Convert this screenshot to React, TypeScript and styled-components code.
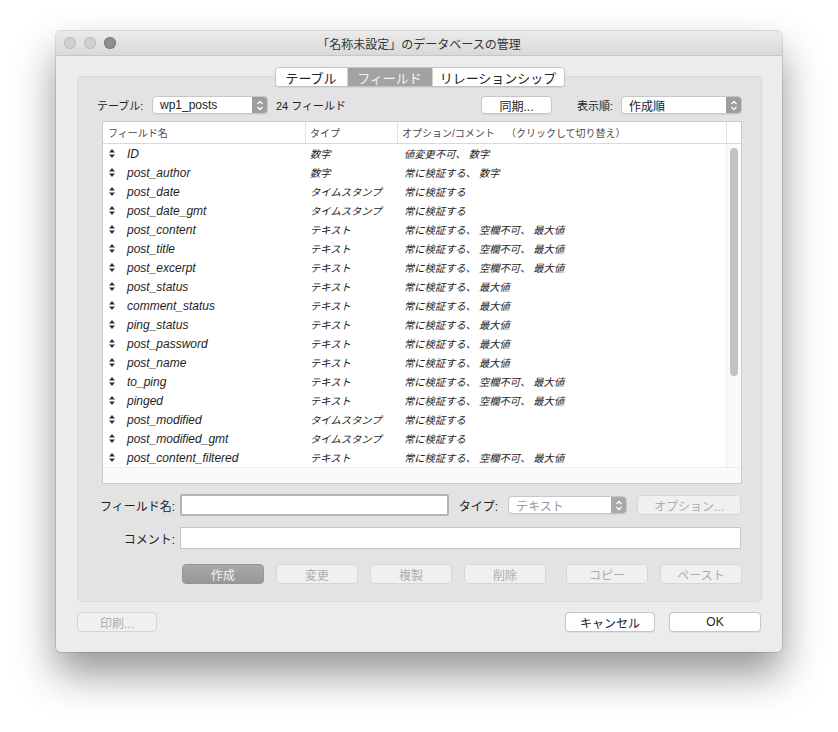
import React from 'react';
import styled, { createGlobalStyle } from 'styled-components';

const GlobalStyle = createGlobalStyle`
  html, body { margin: 0; padding: 0; background: #ffffff; }
  body { font-family: "Liberation Sans", "Noto Sans CJK JP", sans-serif; color: #222; }
`;

interface Field {
  name: string;
  type: string;
  option: string;
}

const VALID = '常に検証する';
const FULL = '常に検証する、 空欄不可、 最大値';
const MAX = '常に検証する、 最大値';

const fields: Field[] = [
  { name: 'ID', type: '数字', option: '値変更不可、 数字' },
  { name: 'post_author', type: '数字', option: '常に検証する、 数字' },
  { name: 'post_date', type: 'タイムスタンプ', option: VALID },
  { name: 'post_date_gmt', type: 'タイムスタンプ', option: VALID },
  { name: 'post_content', type: 'テキスト', option: FULL },
  { name: 'post_title', type: 'テキスト', option: FULL },
  { name: 'post_excerpt', type: 'テキスト', option: FULL },
  { name: 'post_status', type: 'テキスト', option: MAX },
  { name: 'comment_status', type: 'テキスト', option: MAX },
  { name: 'ping_status', type: 'テキスト', option: MAX },
  { name: 'post_password', type: 'テキスト', option: MAX },
  { name: 'post_name', type: 'テキスト', option: MAX },
  { name: 'to_ping', type: 'テキスト', option: FULL },
  { name: 'pinged', type: 'テキスト', option: FULL },
  { name: 'post_modified', type: 'タイムスタンプ', option: VALID },
  { name: 'post_modified_gmt', type: 'タイムスタンプ', option: VALID },
  { name: 'post_content_filtered', type: 'テキスト', option: FULL },
];

const Page = styled.div`
  padding: 31px 0 80px 56px;
`;

const Window = styled.div`
  width: 726px;
  height: 621px;
  background: #ececec;
  border-radius: 5px;
  box-shadow: 0 0 0 1px rgba(0, 0, 0, 0.12), 0 22px 42px rgba(0, 0, 0, 0.42);
  display: flex;
  flex-direction: column;
  overflow: hidden;
`;

const TitleBar = styled.div`
  height: 24px;
  flex-shrink: 0;
  display: flex;
  align-items: center;
  position: relative;
  background: linear-gradient(#ebebeb, #d9d9d9);
  border-bottom: 1px solid #c6c6c6;
`;

const Lights = styled.div`
  display: flex;
  gap: 8px;
  padding-left: 8px;
`;

const Light = styled.span<{ dark?: boolean }>`
  width: 12px;
  height: 12px;
  border-radius: 50%;
  background: ${(p) => (p.dark ? '#8e8e8e' : '#d1d1d1')};
  box-shadow: inset 0 0 0 1px ${(p) => (p.dark ? '#7c7c7c' : '#bdbdbd')};
`;

const Title = styled.div`
  position: absolute;
  left: 0;
  right: 0;
  text-align: center;
  font-size: 12px;
  color: #333;
  pointer-events: none;
`;

const Body = styled.div`
  display: flex;
  flex-direction: column;
  padding: 11px 20px 0 21px;
`;

const Tabs = styled.div`
  align-self: center;
  display: flex;
  height: 20px;
  box-sizing: border-box;
  margin-bottom: -11px;
  position: relative;
  z-index: 1;
  background: #fff;
  border: 1px solid #c2c2c2;
  border-radius: 4px;
  box-shadow: 0 1px 0 rgba(0, 0, 0, 0.06);
  overflow: hidden;
`;

const Tab = styled.div<{ active?: boolean; w: number }>`
  width: ${(p) => p.w}px;
  display: flex;
  align-items: center;
  justify-content: center;
  font-size: 13px;
  color: ${(p) => (p.active ? '#f4f4f4' : '#222')};
  background: ${(p) => (p.active ? '#a2a2a2' : '#fff')};
  border-left: 1px solid #d4d4d4;
  &:first-child { border-left: none; }
`;

const GroupBox = styled.div`
  height: 526px;
  box-sizing: border-box;
  background: #e3e3e3;
  border: 1px solid #dadada;
  border-radius: 5px;
  padding: 19px 19px 0 19px;
  display: flex;
  flex-direction: column;
`;

const Toolbar = styled.div`
  display: flex;
  align-items: center;
  height: 18px;
  font-size: 11px;
`;

const Label = styled.span<{ w?: number }>`
  font-size: 11px;
  color: #222;
  white-space: nowrap;
  ${(p) => (p.w ? `width: ${p.w}px;` : '')}
`;

const Popup = styled.div<{ w: number; disabled?: boolean }>`
  width: ${(p) => p.w}px;
  height: 18px;
  box-sizing: border-box;
  display: flex;
  align-items: center;
  background: #fff;
  border: 1px solid #c7c7c7;
  border-radius: 4px;
  box-shadow: 0 1px 0 rgba(0, 0, 0, 0.05);
  overflow: hidden;
  font-size: 12px;
  color: ${(p) => (p.disabled ? '#9a9a9a' : '#222')};
`;

const PopupText = styled.span`
  flex: 1;
  padding-left: 7px;
`;

const Stepper = styled.span<{ disabled?: boolean }>`
  width: 15px;
  height: 100%;
  display: flex;
  align-items: center;
  justify-content: center;
  background: ${(p) => (p.disabled ? '#a9a9a9' : '#9d9d9d')};
`;

const Button = styled.div<{ w: number; variant?: 'normal' | 'disabled' | 'pressed' }>`
  width: ${(p) => p.w}px;
  height: 20px;
  box-sizing: border-box;
  display: flex;
  align-items: center;
  justify-content: center;
  border-radius: 4px;
  font-size: 12px;
  flex-shrink: 0;
  ${(p) =>
    p.variant === 'disabled'
      ? 'background: #f0f0f0; border: 1px solid #d6d6d6; color: #adadad;'
      : p.variant === 'pressed'
      ? 'background: linear-gradient(#a9a9a9, #979797); border: 1px solid #959595; color: #f2f2f2;'
      : 'background: #fff; border: 1px solid #c5c5c5; color: #222; box-shadow: 0 1px 0 rgba(0,0,0,0.06);'}
`;

const Table = styled.div`
  margin: 7px 0 0 5px;
  width: 640px;
  height: 363px;
  box-sizing: border-box;
  background: #fff;
  border: 1px solid #cbcbcb;
  display: flex;
  flex-direction: column;
`;

const HeaderRow = styled.div`
  display: grid;
  grid-template-columns: 203px 92px 329px 1fr;
  height: 21px;
  flex-shrink: 0;
  border-bottom: 1px solid #d9d9d9;
  font-size: 10px;
  color: #4a4a4a;
`;

const HeaderCell = styled.div<{ pad: number }>`
  display: flex;
  align-items: center;
  padding-left: ${(p) => p.pad}px;
  border-right: 1px solid #e2e2e2;
  white-space: nowrap;
  &:last-child { border-right: none; }
`;

const TableMain = styled.div`
  flex: 1;
  display: flex;
`;

const RowList = styled.div`
  flex: 1;
  display: flex;
  flex-direction: column;
`;

const Row = styled.div`
  display: grid;
  grid-template-columns: 203px 92px 1fr;
  height: 19px;
  align-items: center;
  font-style: italic;
  color: #1e1e1e;
  white-space: nowrap;
`;

const NameCell = styled.div`
  display: flex;
  align-items: center;
  padding-left: 6px;
  gap: 12px;
  font-size: 12px;
`;

const TypeCell = styled.div`
  padding-left: 4px;
  font-size: 10.3px;
`;

const OptCell = styled.div`
  padding-left: 6px;
  font-size: 10.3px;
`;

const VTrack = styled.div`
  width: 15px;
  border-left: 1px solid #ededed;
  background: #fafafa;
  display: flex;
  justify-content: center;
  padding-top: 4px;
  box-sizing: border-box;
`;

const Thumb = styled.div`
  width: 8px;
  height: 228px;
  border-radius: 4px;
  background: #c2c2c2;
`;

const HTrack = styled.div`
  height: 15px;
  flex-shrink: 0;
  background: #fafafa;
  border-top: 1px solid #ededed;
`;

const FormRow = styled.div<{ mt: number }>`
  display: flex;
  align-items: center;
  margin-top: ${(p) => p.mt}px;
`;

const FormLabel = styled.span<{ w?: number }>`
  width: ${(p) => p.w ?? 78}px;
  text-align: right;
  font-size: 12px;
  color: #222;
  white-space: nowrap;
`;

const TextField = styled.div<{ w: number; focused?: boolean }>`
  width: ${(p) => p.w}px;
  height: 22px;
  margin-left: 5px;
  box-sizing: border-box;
  background: #fff;
  border: ${(p) => (p.focused ? '2px solid #b4b4b4' : '1px solid #c4c4c4')};
  border-radius: ${(p) => (p.focused ? '2px' : '0')};
`;

const ButtonRow = styled.div`
  display: flex;
  gap: 12px;
  margin-top: 15px;
  padding-left: 85px;
`;

const Footer = styled.div`
  display: flex;
  align-items: center;
  margin-top: 10px;
  gap: 14px;
`;

const Spacer = styled.div`
  flex: 1;
`;

const SortIcon = () => (
  <svg width="6" height="9" viewBox="0 0 6 9">
    <path d="M3 0 L6 3.6 L0 3.6 Z M0 5.4 L6 5.4 L3 9 Z" fill="#333" />
  </svg>
);

const Chevrons = () => (
  <svg width="8" height="11" viewBox="0 0 8 11">
    <path d="M1.5 4 L4 1.5 L6.5 4 M1.5 7 L4 9.5 L6.5 7" stroke="#fff" strokeWidth="1.3" fill="none" />
  </svg>
);

const PopupButton = ({ w, text, disabled }: { w: number; text: string; disabled?: boolean }) => (
  <Popup w={w} disabled={disabled}>
    <PopupText>{text}</PopupText>
    <Stepper disabled={disabled}>
      <Chevrons />
    </Stepper>
  </Popup>
);

export default function App() {
  return (
    <Page>
      <GlobalStyle />
      <Window>
        <TitleBar>
          <Lights>
            <Light />
            <Light />
            <Light dark />
          </Lights>
          <Title>「名称未設定」のデータベースの管理</Title>
        </TitleBar>
        <Body>
          <Tabs>
            <Tab w={71}>テーブル</Tab>
            <Tab w={84} active>
              フィールド
            </Tab>
            <Tab w={131}>リレーションシップ</Tab>
          </Tabs>
          <GroupBox>
            <Toolbar>
              <Label w={55}>テーブル:</Label>
              <PopupButton w={116} text="wp1_posts" />
              <Label style={{ marginLeft: 8 }}>24 フィールド</Label>
              <Button w={71} style={{ marginLeft: 'auto', height: 18 }}>
                同期...
              </Button>
              <Label w={44} style={{ marginLeft: 25 }}>
                表示順:
              </Label>
              <PopupButton w={121} text="作成順" />
            </Toolbar>
            <Table>
              <HeaderRow>
                <HeaderCell pad={5}>フィールド名</HeaderCell>
                <HeaderCell pad={4}>タイプ</HeaderCell>
                <HeaderCell pad={4}>オプション/コメント&nbsp;&nbsp;&nbsp;&nbsp;（クリックして切り替え）</HeaderCell>
                <HeaderCell pad={0} />
              </HeaderRow>
              <TableMain>
                <RowList>
                  {fields.map((f) => (
                    <Row key={f.name}>
                      <NameCell>
                        <SortIcon />
                        <span>{f.name}</span>
                      </NameCell>
                      <TypeCell>{f.type}</TypeCell>
                      <OptCell>{f.option}</OptCell>
                    </Row>
                  ))}
                </RowList>
                <VTrack>
                  <Thumb />
                </VTrack>
              </TableMain>
              <HTrack />
            </Table>
            <FormRow mt={10}>
              <FormLabel>フィールド名:</FormLabel>
              <TextField w={269} focused />
              <FormLabel w={40} style={{ marginLeft: 9, marginRight: 10 }}>
                タイプ:
              </FormLabel>
              <PopupButton w={119} text="テキスト" disabled />
              <Button w={104} variant="disabled" style={{ marginLeft: 10 }}>
                オプション...
              </Button>
            </FormRow>
            <FormRow mt={11}>
              <FormLabel>コメント:</FormLabel>
              <TextField w={561} />
            </FormRow>
            <ButtonRow>
              <Button w={82} variant="pressed">作成</Button>
              <Button w={82} variant="disabled">変更</Button>
              <Button w={82} variant="disabled">複製</Button>
              <Button w={82} variant="disabled">削除</Button>
              <Button w={82} variant="disabled" style={{ marginLeft: 8 }}>
                コピー
              </Button>
              <Button w={82} variant="disabled">ペースト</Button>
            </ButtonRow>
          </GroupBox>
          <Footer>
            <Button w={80} variant="disabled">印刷...</Button>
            <Spacer />
            <Button w={90}>キャンセル</Button>
            <Button w={92} style={{ marginRight: 1 }}>
              OK
            </Button>
          </Footer>
        </Body>
      </Window>
    </Page>
  );
}
